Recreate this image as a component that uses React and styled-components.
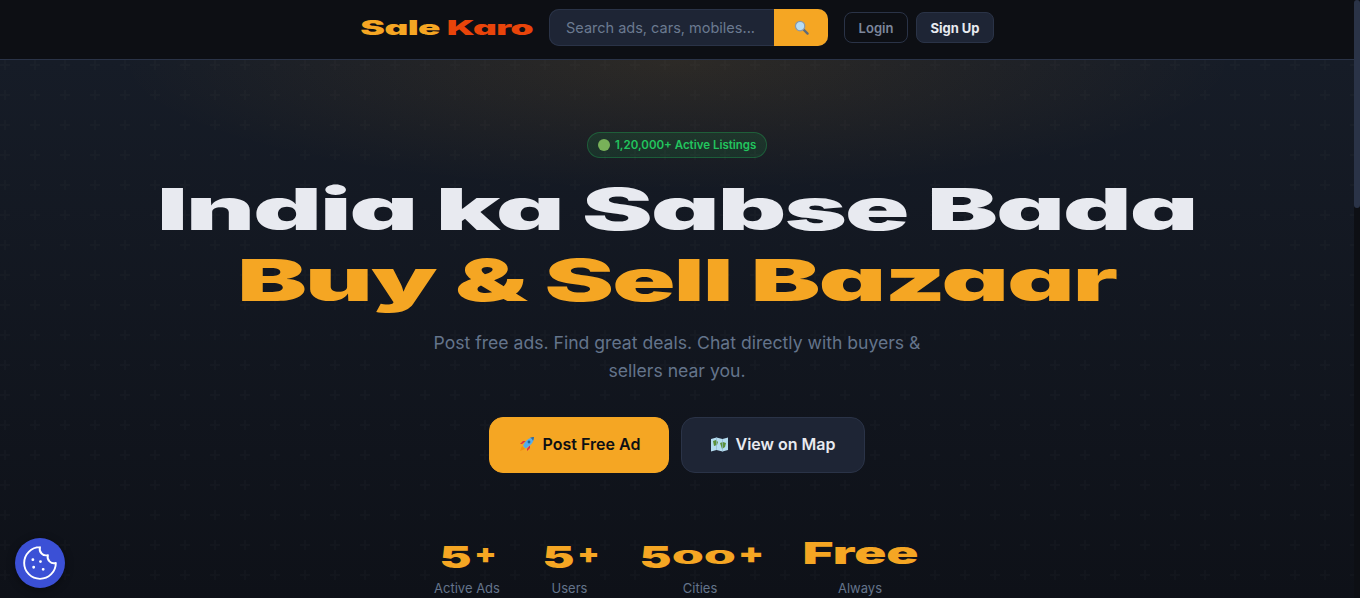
import styled, { createGlobalStyle } from "styled-components";

const GlobalStyle = createGlobalStyle`
  * { box-sizing: border-box; }
  html, body { margin: 0; padding: 0; background: #0d0f14; }
  body { font-family: "Inter", "Liberation Sans", sans-serif; color: #e8eaf0; }
`;

const plus = `url("data:image/svg+xml,%3Csvg xmlns='http://www.w3.org/2000/svg' width='30' height='30'%3E%3Cpath d='M5 0v10M0 5h10' stroke='%23ffffff' stroke-opacity='0.015' stroke-width='2' fill='none'/%3E%3C/svg%3E")`;

const Page = styled.div`
  height: 100vh;
  display: flex;
  overflow: hidden;
`;

const Main = styled.main`
  flex: 1;
  min-width: 0;
`;

const ScrollTrack = styled.div`
  width: 6px;
  background: #0d0f14;
`;

const ScrollThumb = styled.div`
  height: 208px;
  border-radius: 3px;
  background: #2a3347;
`;

const Nav = styled.nav`
  height: 60px;
  padding-bottom: 4px;
  display: flex;
  align-items: center;
  justify-content: center;
  gap: 16px;
  background: #0d0f14;
  border-bottom: 1px solid #2a3347;
`;

const Logo = styled.div`
  width: 174px;
  margin-right: -1px;
  display: flex;
  justify-content: center;
  white-space: nowrap;
  font-size: 20px;
  font-weight: 900;
  letter-spacing: -0.3px;
  font-feature-settings: "cv11";
  color: #f5a623;
  span.inner {
    display: inline-block;
    transform: scaleX(1.85);
  }
  em {
    font-style: normal;
    color: #e8440a;
  }
`;

const SearchBar = styled.div`
  width: 279px;
  height: 37px;
  display: flex;
  border-radius: 10px;
  overflow: hidden;
  box-shadow: inset 0 0 0 1px #2a3347;
  background: #1e2535;
`;

const SearchText = styled.div`
  flex: 1;
  padding-left: 17px;
  display: flex;
  align-items: center;
  font-size: 14.5px;
  color: #6b7a90;
  white-space: nowrap;
`;

const SearchButton = styled.div`
  width: 54px;
  display: flex;
  align-items: center;
  justify-content: center;
  background: #f5a623;
`;

const NavActions = styled.div`
  display: flex;
  gap: 8px;
`;

const NavButton = styled.button`
  height: 31px;
  width: ${(p) => (p.$filled ? "78px" : "64px")};
  padding: 0;
  border-radius: 8px;
  border: 1px solid #2a3347;
  background: ${(p) => (p.$filled ? "#1e2535" : "transparent")};
  color: ${(p) => (p.$filled ? "#e8eaf0" : "#7d879c")};
  font-family: inherit;
  font-size: 13px;
  font-weight: ${(p) => (p.$filled ? 700 : 600)};
`;

const Hero = styled.section`
  height: 538px;
  overflow: hidden;
  padding-top: 72px;
  display: flex;
  flex-direction: column;
  align-items: center;
  background:
    ${plus},
    radial-gradient(ellipse 560px 130px at 50% 0, rgba(245, 166, 35, 0.1), transparent),
    linear-gradient(180deg, #161c27 0%, #0e1118 100%);
`;

const Badge = styled.div`
  height: 26px;
  width: 180px;
  display: flex;
  align-items: center;
  gap: 5px;
  padding-left: 10px;
  border-radius: 13px;
  border: 1px solid rgba(34, 197, 94, 0.3);
  background: rgba(34, 197, 94, 0.12);
  color: #22c55e;
  font-size: 11.5px;
  font-weight: 600;
  white-space: nowrap;
`;

const Dot = styled.span`
  width: 12px;
  height: 12px;
  border-radius: 50%;
  background: #78b159;
`;

const Title = styled.h1`
  margin: 16px 0 0;
  font-size: 58px;
  line-height: 71px;
  font-weight: 900;
  letter-spacing: -1px;
  font-feature-settings: "cv11";
  text-align: center;
  white-space: nowrap;
`;

const TitleLine = styled.span`
  display: block;
  color: ${(p) => p.$color};
  transform: scaleX(${(p) => p.$scale});
`;

const Lead = styled.p`
  margin: 13px 0 0;
  width: 520px;
  text-align: center;
  font-size: 17.6px;
  line-height: 28px;
  color: #64748b;
`;

const Actions = styled.div`
  margin-top: 32px;
  display: flex;
  gap: 12px;
`;

const ActionButton = styled.button`
  height: 56px;
  width: ${(p) => (p.$primary ? "180px" : "184px")};
  display: flex;
  align-items: center;
  justify-content: center;
  gap: 8px;
  padding: 0 0 2px ${(p) => (p.$primary ? "1px" : "0")};
  border-radius: 14px;
  border: 1px solid ${(p) => (p.$primary ? "#f5a623" : "#2a3347")};
  background: ${(p) => (p.$primary ? "#f5a623" : "#1e2535")};
  color: ${(p) => (p.$primary ? "#0d0f14" : "#e8eaf0")};
  font-family: inherit;
  font-size: 16px;
  font-weight: 600;
`;

const Stats = styled.div`
  margin-top: 62px;
  display: flex;
  gap: 41px;
  margin-left: -3px;
`;

const Stat = styled.div`
  width: ${(p) => p.$width}px;
  display: flex;
  flex-direction: column;
  align-items: center;
`;

const StatValue = styled.div`
  height: 36px;
  display: flex;
  justify-content: center;
  align-items: baseline;
  white-space: nowrap;
  color: #f5a623;
  line-height: 36px;
  font-weight: 900;
`;

/* old-style numerals: each glyph has its own size, stretch and drop */
const Glyph = styled.span`
  width: ${(p) => p.$width}px;
  margin-left: ${(p) => p.$gap || 0}px;
  text-align: center;
  font-size: ${(p) => p.$size}px;
  transform: translateY(${(p) => p.$drop || 0}px) scaleX(${(p) => p.$scale});
`;

const StatLabel = styled.div`
  margin-top: 8px;
  font-size: 13px;
  line-height: 18px;
  color: #64748b;
  white-space: nowrap;
`;

const CookieButton = styled.div`
  position: fixed;
  left: 15px;
  bottom: 10px;
  width: 50px;
  height: 50px;
  border-radius: 50%;
  display: flex;
  align-items: center;
  justify-content: center;
  background: #3b50d6;
  box-shadow: 0 2px 8px rgba(0, 0, 0, 0.4);
`;

const SearchIcon = () => (
  <svg width="15" height="15" viewBox="0 0 16 16">
    <path d="M10 10l4.500 4.500" stroke="#5f6b78" strokeWidth="2.400" strokeLinecap="round" />
    <circle cx="6.500" cy="6.500" r="5" fill="#b6dcf5" stroke="#8c9aa6" strokeWidth="1.400" />
  </svg>
);

const RocketIcon = () => (
  <svg width="16" height="16" viewBox="0 0 16 16">
    <path d="M1 15l2-5 3 3z" fill="#f4900c" />
    <path d="M3 8L1 8l3-3h3zM8 13v2l3-3V9z" fill="#dd2e44" />
    <path d="M4 10C6 5 10 1.500 15 1c0 5-3.500 9-8.500 11.500z" fill="#55acee" />
    <path d="M11 1.800c1 0 2.500 1.500 3 3 .5-1 1-2.500 1-3.800-1.400 0-3 .3-4 .8z" fill="#3b6b94" />
    <circle cx="10" cy="6" r="1.400" fill="#226699" />
  </svg>
);

const MapIcon = () => (
  <svg width="17" height="15" viewBox="0 0 17 15">
    <path d="M0 2l5.500-1.500 6 1.500L17 .5v12.500l-5.500 1.500-6-1.500L0 14.500z" fill="#b5dcf0" />
    <path d="M2 4l3-1 2 2-1 3-3 1zM9 6l3-1 3 1-1 4-3 2-1-3z" fill="#5c913b" />
    <path d="M5.500.5v12.500M11.500 2v12.500" stroke="#8fb8cc" strokeWidth=".7" />
  </svg>
);

const CookieIcon = () => (
  <svg width="38" height="38" viewBox="0 0 24 24" fill="none" stroke="#fff" strokeWidth="1.200" strokeLinecap="round" strokeLinejoin="round">
    <path d="M12 2a10 10 0 1 0 10 10 4 4 0 0 1-5-5 4 4 0 0 1-5-5" />
    <path d="M7.500 9.900v.01M12.300 11.100v.01M8 14.700v.01M14 16v.01" strokeWidth="1.800" />
  </svg>
);

const five = { ch: "5", width: 33, size: 30, scale: 1.6, drop: 4 };
const zero = { ch: "0", width: 32, size: 19, scale: 2.35 };
const smallPlus = { ch: "+", width: 19, size: 27, scale: 1.2, gap: 4, drop: -1 };
const stats = [
  { label: "Active Ads", width: 67, glyphs: [five, smallPlus] },
  { label: "Users", width: 56, glyphs: [five, smallPlus] },
  { label: "Cities", width: 123, glyphs: [five, zero, zero, { ch: "+", width: 22, size: 28, scale: 1.35, gap: 4, drop: -1 }] },
  { label: "Always", width: 115, glyphs: [{ ch: "Free", width: 115, size: 30, scale: 1.77 }] },
];

export default function App() {
  return (
    <Page>
      <GlobalStyle />
      <Main>
        <Nav>
          <Logo>
            <span className="inner">
              Sale <em>Karo</em>
            </span>
          </Logo>
          <SearchBar>
            <SearchText>Search ads, cars, mobiles...</SearchText>
            <SearchButton>
              <SearchIcon />
            </SearchButton>
          </SearchBar>
          <NavActions>
            <NavButton>Login</NavButton>
            <NavButton $filled>Sign Up</NavButton>
          </NavActions>
        </Nav>
        <Hero>
          <Badge>
            <Dot />
            1,20,000+ Active Listings
          </Badge>
          <Title>
            <TitleLine $color="#e8eaf0" $scale={1.832}>India ka Sabse Bada</TitleLine>
            <TitleLine $color="#f5a623" $scale={1.8}>Buy &amp; Sell Bazaar</TitleLine>
          </Title>
          <Lead>Post free ads. Find great deals. Chat directly with buyers &amp; sellers near you.</Lead>
          <Actions>
            <ActionButton $primary>
              <RocketIcon />
              Post Free Ad
            </ActionButton>
            <ActionButton>
              <MapIcon />
              View on Map
            </ActionButton>
          </Actions>
          <Stats>
            {stats.map((s) => (
              <Stat key={s.label} $width={s.width}>
                <StatValue>
                  {s.glyphs.map((g, i) => (
                    <Glyph key={i} $width={g.width} $size={g.size} $scale={g.scale} $drop={g.drop} $gap={g.gap}>
                      {g.ch}
                    </Glyph>
                  ))}
                </StatValue>
                <StatLabel>{s.label}</StatLabel>
              </Stat>
            ))}
          </Stats>
        </Hero>
      </Main>
      <ScrollTrack>
        <ScrollThumb />
      </ScrollTrack>
      <CookieButton>
        <CookieIcon />
      </CookieButton>
    </Page>
  );
}
